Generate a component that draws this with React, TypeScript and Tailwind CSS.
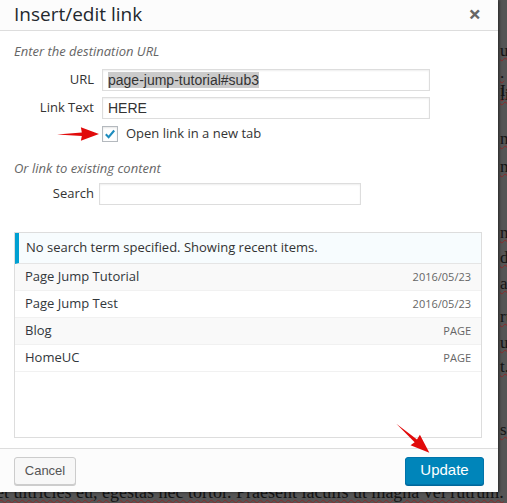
import React from 'react';

const recentItems = [
  { title: 'Page Jump Tutorial', info: '2016/05/23' },
  { title: 'Page Jump Test', info: '2016/05/23' },
  { title: 'Blog', info: 'PAGE' },
  { title: 'HomeUC', info: 'PAGE' },
];

// fragments of the editor text peeking out behind the modal
const pageLines = [
  { top: 42, text: 'ue' },
  { top: 64, text: '. I' },
  { top: 86, text: 'lia' },
  { top: 130, text: 'na' },
  { top: 158, text: 'm' },
  { top: 224, text: 'n' },
  { top: 249, text: 'd' },
  { top: 275, text: 'ac' },
  { top: 308, text: 'ru' },
  { top: 334, text: 'u' },
  { top: 358, text: 't.' },
  { top: 421, text: 'sa' },
];

const RedArrow = ({ className, rotate }: { className: string; rotate: number }) => (
  <svg className={className} viewBox="0 0 44 16" style={{ transform: `rotate(${rotate}deg)` }}>
    <path d="M0 8.5 L26 6.5 L25 1 L44 8 L25 15 L26 10 Z" fill="#e10b0b" />
  </svg>
);

export default function App() {
  return (
    <div className="relative w-[507px] h-[503px] overflow-hidden bg-[#555555]" style={{ fontFamily: '"Open Sans", sans-serif' }}>
      {/* page behind the backdrop */}
      <div className="absolute inset-0 text-[#141414] text-[17px]" style={{ fontFamily: '"Liberation Serif", serif' }}>
        {pageLines.map((l) => (
          <span key={l.top} className="absolute left-[500px] leading-[18px] underline decoration-wavy decoration-[#8a2a2a] decoration-1" style={{ top: l.top }}>
            {l.text}
          </span>
        ))}
        <div className="absolute left-[-4px] top-[479px] whitespace-nowrap text-[18px] underline decoration-wavy decoration-[#8a2a2a] decoration-1">
          et ultricies eu, egestas nec tortor. Praesent iaculis ut magna vel rutrum.
        </div>
      </div>

      {/* modal */}
      <div className="relative flex flex-col w-[498px] h-[492px] bg-white shadow-[1px_0_3px_rgba(0,0,0,0.6)]">
        <div className="flex items-center justify-between h-[31px] px-[14px] bg-[#fcfcfc] border-b border-[#dddddd]">
          <h1 className="text-[19px] leading-[30px] text-[#23282d] -mt-[3px]">Insert/edit link</h1>
          <span className="text-[22px] font-bold text-[#666666] leading-none mr-[3px] -mt-[4px]">×</span>
        </div>

        <div className="flex flex-col flex-1 px-[14px] pt-[10px]">
          <p className="italic text-[13px] text-[#666666] leading-5">Enter the destination URL</p>

          <div className="flex items-center mt-[8px] h-[22px]">
            <span className="w-[80px] text-right text-[13px] text-[#333333]">URL</span>
            <div className="ml-[8px] w-[328px] h-[22px] border border-[#dddddd] shadow-[inset_0_1px_2px_rgba(0,0,0,0.07)] flex items-center px-[5px]">
              <span className="bg-[#cbcbcb] text-[14px] text-[#333333] leading-[16px]" style={{ fontFamily: '"Liberation Sans", Arial, sans-serif' }}>
                page-jump-tutorial#sub3
              </span>
            </div>
          </div>

          <div className="flex items-center mt-[6px] h-[22px]">
            <span className="w-[80px] text-right text-[13px] text-[#333333]">Link Text</span>
            <div className="ml-[8px] w-[328px] h-[22px] border border-[#dddddd] shadow-[inset_0_1px_2px_rgba(0,0,0,0.07)] flex items-center px-[5px]">
              <span className="text-[14px] text-[#333333]" style={{ fontFamily: '"Liberation Sans", Arial, sans-serif' }}>HERE</span>
            </div>
          </div>

          <div className="flex items-center mt-[7px] h-[16px] ml-[88px]">
            <div className="w-[16px] h-[16px] border border-[#b4b9be] bg-white shadow-[inset_0_1px_2px_rgba(0,0,0,0.1)] flex items-center justify-center">
              <svg width="14" height="14" viewBox="0 0 20 20">
                <path d="M4 10.5 L8 14.5 L16 5" fill="none" stroke="#1e8cbe" strokeWidth="3" />
              </svg>
            </div>
            <span className="ml-[8px] text-[13px] text-[#333333]">Open link in a new tab</span>
          </div>

          <p className="italic text-[13px] text-[#666666] leading-5 mt-[16px]">Or link to existing content</p>

          <div className="flex items-center mt-[5px] h-[22px]">
            <span className="w-[80px] text-right text-[13px] text-[#333333]">Search</span>
            <div className="ml-[5px] w-[262px] h-[22px] border border-[#dddddd] shadow-[inset_0_1px_2px_rgba(0,0,0,0.07)]" />
          </div>

          <div className="mt-[27px] w-[468px] h-[206px] border border-[#dddddd] flex flex-col">
            <div className="flex items-center h-[31px] bg-[#f7fcfe] border-l-4 border-[#00a0d2] pl-[7px] border-b border-b-[#e5e5e5] text-[13px] text-[#333333]">
              No search term specified. Showing recent items.
            </div>
            {recentItems.map((item, i) => (
              <div
                key={item.title}
                className={`flex items-center justify-between h-[27px] px-[10px] border-b border-[#f1f1f1] ${i % 2 === 0 ? 'bg-[#f9f9f9]' : 'bg-white'}`}
              >
                <span className="text-[13px] text-[#32373c]">{item.title}</span>
                <span className="text-[11px] text-[#666666]">{item.info}</span>
              </div>
            ))}
          </div>
        </div>

        <div className="flex items-center justify-between h-[44px] px-[14px] bg-[#fcfcfc] border-t border-[#dddddd]" style={{ fontFamily: '"Liberation Sans", Arial, sans-serif' }}>
          <button className="h-[28px] w-[62px] rounded-[3px] border border-[#cccccc] bg-[#f7f7f7] shadow-[0_1px_0_#cccccc] text-[13px] text-[#555555]">
            Cancel
          </button>
          <button className="h-[28px] w-[79px] rounded-[3px] border border-[#0073aa] bg-[#0085ba] shadow-[0_1px_0_#006799] text-[15px] text-white">
            Update
          </button>
        </div>

        {/* annotation arrows */}
        <RedArrow className="absolute left-[57px] top-[126px] w-[42px] h-[16px]" rotate={0} />
        <RedArrow className="absolute left-[390px] top-[430px] w-[46px] h-[16px]" rotate={42} />
      </div>
    </div>
  );
}
